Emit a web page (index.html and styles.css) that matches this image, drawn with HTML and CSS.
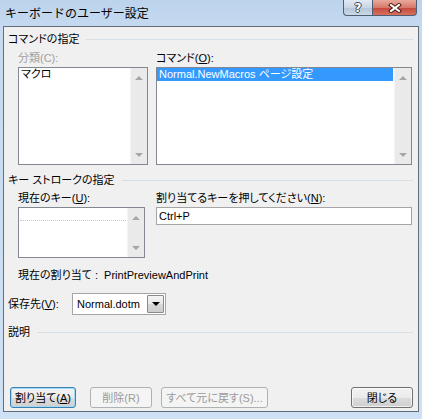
FILE: index.html
```html
<!DOCTYPE html>
<html lang="ja">
<head>
<meta charset="utf-8">
<title>キーボードのユーザー設定</title>
<link rel="stylesheet" href="styles.css">
</head>
<body>
<div class="window">
  <div class="titlebar">
    <span class="title">キーボードのユーザー設定</span>
    <div class="caps">
      <div class="cap help"><span class="qm">?</span></div>
      <div class="cap close">
        <svg width="14" height="10" viewBox="0 0 14 10"><path d="M3 2 L11 8 M11 2 L3 8" stroke="#4b1a14" stroke-width="4" stroke-linecap="square" fill="none"/><path d="M3 2 L11 8 M11 2 L3 8" stroke="#ffffff" stroke-width="2" stroke-linecap="square" fill="none"/></svg>
      </div>
    </div>
  </div>
  <div class="client">
    <div class="ghead"><span>コマンドの指定</span><i class="rule"></i></div>
    <div class="cols cols1">
      <div class="field">
        <div class="lbl disabled">分類(C):</div>
        <div class="listbox tall">
          <div class="items"><div class="item">マクロ</div></div>
          <div class="vscroll"><i class="up"></i><i class="down"></i></div>
        </div>
      </div>
      <div class="field">
        <div class="lbl">コマンド(<u>O</u>):</div>
        <div class="listbox tall">
          <div class="items"><div class="item sel">Normal.NewMacros ページ設定</div></div>
          <div class="vscroll"><i class="up"></i><i class="down"></i></div>
        </div>
      </div>
    </div>

    <div class="ghead gh2"><span>キー ストロークの指定</span><i class="rule"></i></div>
    <div class="cols cols2">
      <div class="field">
        <div class="lbl">現在のキー(<u>U</u>):</div>
        <div class="listbox short">
          <div class="items"><div class="item focus"></div></div>
          <div class="vscroll"><i class="up"></i><i class="down"></i></div>
        </div>
      </div>
      <div class="field">
        <div class="lbl">割り当てるキーを押してください(<u>N</u>):</div>
        <div class="textbox">Ctrl+P</div>
      </div>
    </div>

    <div class="current">現在の割り当て :&nbsp; PrintPreviewAndPrint</div>

    <div class="saverow">
      <span class="savelbl">保存先(<u>V</u>):</span>
      <div class="combo">
        <span class="combotext">Normal.dotm</span>
        <span class="dropbtn"><i class="down dark"></i></span>
      </div>
    </div>

    <div class="ghead gh3"><span>説明</span><i class="rule"></i></div>

    <div class="btnrow">
      <div class="btn default b1">割り当て(<u>A</u>)</div>
      <div class="btn disabled b2">削除(R)</div>
      <div class="btn disabled b3">すべて元に戻す(S)...</div>
      <div class="btn b4">閉じる</div>
    </div>
  </div>
</div>
</body>
</html>
```

FILE: styles.css
```css
* { box-sizing: border-box; }
html, body { margin: 0; padding: 0; }
body {
  width: 422px;
  height: 419px;
  overflow: hidden;
  font-family: "Liberation Sans", "Noto Sans CJK JP", sans-serif;
  font-size: 11px;
  color: #000;
  font-feature-settings: "palt" 1;
  background: linear-gradient(to bottom, #bcd3ec 0, #c5daf0 26px, #cfe1f4 100%);
}
.window {
  display: flex;
  flex-direction: column;
  height: 419px;
}
.titlebar {
  height: 26px;
  flex: none;
  display: flex;
  align-items: flex-start;
}
.title {
  margin: 5px 0 0 5px;
  line-height: 15px;
  font-family: "Noto Sans CJK JP", sans-serif;
  font-feature-settings: normal;
  font-size: 12px;
}
.caps {
  margin-left: auto;
  margin-right: 5px;
  display: flex;
}
.cap {
  height: 16px;
  border: 1px solid #4f5e72;
  border-top: none;
  display: flex;
  align-items: center;
  justify-content: center;
}
.cap.help {
  width: 29px;
  border-right: none;
  border-radius: 0 0 0 4px;
  background: linear-gradient(#e2eaf3 0, #c9d6e4 50%, #b4c4d7 51%, #cbd8e7 100%);
}
.qm {
  font-family: "DejaVu Sans", sans-serif;
  font-weight: bold;
  font-size: 12px;
  line-height: 12px;
  color: #fff;
  text-shadow: 1px 0 0 #3a4658, -1px 0 0 #3a4658, 0 1px 0 #3a4658, 0 -1px 0 #3a4658;
}
.cap.close {
  width: 45px;
  border-radius: 0 0 4px 0;
  background: linear-gradient(#e9a99c 0, #d7796a 50%, #c4473a 51%, #d7705f 100%);
}
.cap.close svg { display: block; }

.client {
  flex: 1;
  margin: 0 3px 7px 3px;
  border: 1px solid #646e7a;
  background: #f0f0f0;
  padding: 5px 5px 3px 4px;
  display: flex;
  flex-direction: column;
}
.ghead {
  display: flex;
  align-items: center;
  height: 14px;
  line-height: 14px;
  white-space: nowrap;
}
.ghead .rule {
  flex: 1;
  height: 1px;
  background: #d5dfe5;
  margin-left: 7px;
}
.gh2 { margin-top: 8px; }
.gh3 { margin-top: 10px; }

.cols {
  display: grid;
  margin-left: 10px;
}
.cols1 {
  grid-template-columns: 130px 256px;
  column-gap: 8px;
  margin-top: 5px;
}
.cols2 {
  grid-template-columns: 127px 256px;
  column-gap: 11px;
  margin-top: 4px;
}
.lbl {
  height: 14px;
  line-height: 14px;
  margin-bottom: 2px;
  white-space: nowrap;
}
.lbl.disabled { color: #a0a0a0; }
u { text-underline-offset: 1px; }

.listbox {
  border: 1px solid #828790;
  background: #fff;
  display: flex;
}
.listbox.tall { height: 98px; }
.listbox.short { height: 51px; }
.items {
  flex: 1;
  min-width: 0;
}
.item {
  height: 13px;
  line-height: 13px;
  padding-left: 2px;
  white-space: nowrap;
}
.item.sel {
  background: #3399ff;
  color: #fff;
  margin-right: 1px;
}
.item.focus {
  margin: 0 1px;
  border-bottom: 1px dotted #c8c8c8;
}
.vscroll {
  width: 17px;
  flex: none;
  background: #eaeaea;
  border-left: 1px solid #f4f4f4;
  display: flex;
  flex-direction: column;
  justify-content: space-between;
  align-items: center;
  padding: 8px 0 7px;
}
.up, .down {
  display: block;
  width: 0;
  height: 0;
  border-left: 4px solid transparent;
  border-right: 4px solid transparent;
}
.up { border-bottom: 4px solid #a6a6a6; }
.down { border-top: 4px solid #a6a6a6; }
.down.dark { border-top-color: #000; }

.textbox {
  height: 18px;
  border: 1px solid #a5a5a5;
  background: #fff;
  padding-left: 2px;
  line-height: 16px;
  white-space: nowrap;
}

.current {
  margin: 10px 0 0 10px;
  height: 14px;
  line-height: 14px;
  white-space: nowrap;
}

.saverow {
  margin-top: 11px;
  display: flex;
  align-items: center;
  height: 22px;
}
.savelbl {
  width: 64px;
  line-height: 14px;
  white-space: nowrap;
}
.combo {
  width: 94px;
  height: 22px;
  border: 1px solid #a5a5a5;
  background: #fff;
  display: flex;
  align-items: center;
  padding: 1px;
}
.combotext {
  flex: 1;
  padding-left: 3px;
  line-height: 14px;
  white-space: nowrap;
}
.dropbtn {
  width: 17px;
  height: 18px;
  border: 1px solid #8a8a8a;
  border-radius: 1px;
  background: linear-gradient(#f4f4f4 0, #e8e8e8 50%, #d8d8d8 51%, #cdcdcd 100%);
  display: flex;
  align-items: center;
  justify-content: center;
}

.btnrow {
  margin-top: auto;
  display: flex;
  height: 21px;
}
.btn {
  height: 21px;
  border: 1px solid #707070;
  border-radius: 3px;
  background: linear-gradient(#f2f2f2 0, #ebebeb 50%, #dddddd 51%, #cfcfcf 100%);
  box-shadow: inset 0 0 0 1px rgba(255,255,255,0.7);
  display: flex;
  align-items: center;
  justify-content: center;
  line-height: 14px;
  white-space: nowrap;
}
.btn.default {
  border-color: #3c7fb1;
  box-shadow: inset 0 0 0 1px #9fd9f5;
}
.btn.disabled {
  border-color: #adb2b5;
  background: #f4f4f4;
  box-shadow: none;
  color: #9a9a9a;
}
.b1 { width: 66px; margin-left: 2px; }
.b2 { width: 62px; margin-left: 14px; }
.b3 { width: 107px; margin-left: 9px; }
.b4 { width: 62px; margin-left: auto; }
```
